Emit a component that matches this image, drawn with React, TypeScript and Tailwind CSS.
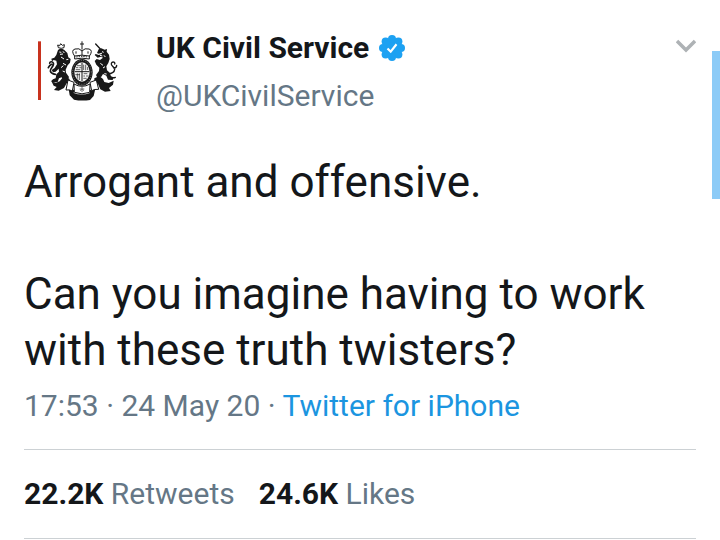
import React from "react";

function RoyalArms() {
  return (
    <svg viewBox="-18 0 324 240" className="mt-1.5 h-20 w-[108px] shrink-0" role="img" aria-label="UK Civil Service crest">
      <path d="M24 34h9v176h-9z" fill="#c8321e" />
      <g transform="translate(48 24)">
        <g fill="#181818">
          {/* lion */}
          <path d="M36 36q9-7 19 0l9 9 3 13 7 5-2 11-7 8-6 13 1 9 9 13-4 9-12 2-6-10-8 3-4 11-13 2-7-4 6-6 8-3 2-12 8-8-1-9-9 9-8 2-4-7 9-6 7-11-2-11-8-2-5 4-2-8 9-3 6-8z" />
          {/* unicorn */}
          <path d="M158 34l8-3 10 4 7-2-1 8 7 9 2 13-4 12-6 10 2 12 9 8 2 11 8 5-2 5-14-1-5-12-10-5-5 8-12 3-4-8 9-12 1-10-9-9-5-11 6-6 10 3 9-7-6-3-10 3-9-8 3-3 9 3 10-3-1-4-9 3-5-2z" />
          {/* outer ribbon curls */}
          <path d="M17 131l12 4 12-5 8-10 9-4 12 6 3 9-11 5-8 14-16 8-14-2 8-9-9-4z" />
          <path d="M145 121l15-7 11 9 4 9 13 3 15-7-2 12-12 10 5 9-17 2-14-7-7-16-11-6z" />
          {/* base ribbon */}
          <path d="M68 153l17 3-2 9q24 9 49 0l-1-8 17-5-5 22-11 12q-25 4-48-1l-13-13z" />
        </g>
        <g fill="none" stroke="#181818" strokeLinecap="round">
          <path d="M28 109q-13-2-15-10c-2-8 13-15 9-24-3-6-11-4-11 1M17 79q-7 3-10 10" strokeWidth="5" />
          <path d="M185 108q20-2 21-14c1-8-13-9-10-18 3-7 13-4 10 2M204 91q8-1 8-9M192 114q7 8 16 4" strokeWidth="4" />
          <path d="M149 18l14 15" strokeWidth="4" />
        </g>
        {/* modelling on the supporters */}
        <g fill="none" stroke="#fff" strokeWidth="3">
          <path d="M40 42l6 1M51 40l4 5M42 49l9-1M45 57l9 6M61 65l6-1M51 76l9 5M45 89l7-6M50 99l7 3" />
          <path d="M168 41l5 2M162 52l7 2M174 52l4 5M163 76l8 6M171 90l6-4M175 107l7 1" />
        </g>
        <g fill="#fff" stroke="#181818" strokeWidth="3">
          <path d="M37 29l-2-8 6 2 3-6 5 5 6-2-1 9q-8 4-17 0z" />
        </g>
        {/* inner ribbon panels */}
        <g fill="#fff" stroke="#181818" strokeWidth="3" strokeLinejoin="round">
          <path d="M66 126l18 7-5 26q-8-5-19-3z" />
          <path d="M151 126l-19 7 5 25q8-5 21-4z" />
          <path d="M84 138q24 14 48 0l-1 25q-23 9-46 0z" />
        </g>
        {/* garter and shield */}
        <ellipse cx="108" cy="103" rx="32" ry="40" fill="#181818" />
        <ellipse cx="108" cy="103" rx="28" ry="36" fill="none" stroke="#aaa" strokeWidth="2" strokeDasharray="3 4" />
        <ellipse cx="108" cy="102" rx="23" ry="29" fill="#f6f6f6" />
        <g fill="none" stroke="#181818" strokeWidth="3">
          <path d="M108 74v55M86 101h44" />
          <path d="M93 83h12M90 89h7M100 89h6M89 95h14M113 80v16M119 80v17M125 87v9M94 106v16M100 106v20M88 110h14M113 107h11M112 114h5M120 114h8M112 121h10" strokeWidth="2" />
        </g>
        {/* crown */}
        <g fill="#fff" stroke="#181818" strokeWidth="3" strokeLinejoin="round">
          <path d="M87 56Q73 37 87 33q13-4 21 6 8-10 21-6 14 4 0 23z" />
          <path d="M108 10v25M102 18h12M108 38v18M90 40v7M126 40v7" fill="none" />
          <path d="M86 54q22-5 44 0v9q-22-5-44 0z" />
        </g>
        <path d="M91 57q17-3 34 0" fill="none" stroke="#181818" strokeWidth="3" strokeDasharray="4 3" />
        <path d="M108 145v17M101 153h14M102 158l6-5 6 5" fill="none" stroke="#777" strokeWidth="3" />
      </g>
    </svg>
  );
}

function VerifiedBadge() {
  return (
    <svg viewBox="0 0 26 26" className="size-[26px]" role="img" aria-label="Verified account">
      <g fill="#1da1f2">
        <circle cx="13" cy="13" r="10" />
        <circle cx="13" cy="4" r="4" />
        <circle cx="19.4" cy="6.6" r="4" />
        <circle cx="22" cy="13" r="4" />
        <circle cx="19.4" cy="19.4" r="4" />
        <circle cx="13" cy="22" r="4" />
        <circle cx="6.6" cy="19.4" r="4" />
        <circle cx="4" cy="13" r="4" />
        <circle cx="6.6" cy="6.6" r="4" />
      </g>
      <path d="M8.5 13.5l3.2 3.2 5.8-7.4" fill="none" stroke="#fff" strokeWidth="2.2" />
    </svg>
  );
}

export default function App() {
  return (
    <main className="relative bg-white px-6 pt-6 font-['Roboto',sans-serif] text-[30px] text-[#657786]">
      <article>
        <header className="flex items-start gap-6">
          <RoyalArms />
          <div className="min-w-0 flex-1 leading-[48px]">
            <div className="flex items-center gap-2.5">
              <h1 className="font-bold text-[#14171a]">UK Civil Service</h1>
              <VerifiedBadge />
            </div>
            <a href="#profile" className="block">@UKCivilService</a>
          </div>
          <button type="button" aria-label="More options" className="mt-3 flex h-5 w-5 items-center justify-center">
            <svg viewBox="0 0 20 20" className="size-5 shrink-0" aria-hidden="true">
              <path d="M1 5l9 9 9-9" fill="none" stroke="#aeb2b5" strokeWidth="3.5" />
            </svg>
          </button>
        </header>

        <div className="mt-[34px] text-[44px] leading-[56px] text-[#14171a]">
          <p>Arrogant and offensive.</p>
          <p className="mt-14">Can you imagine having to work with these truth twisters?</p>
        </div>

        <p className="leading-[56px]">
          <time dateTime="2020-05-24T17:53">17:53 · 24 May 20</time> ·{" "}
          <a href="#source" className="text-[#1b95e0]">Twitter for iPhone</a>
        </p>

        <div className="mt-[15px] flex gap-6 border-y border-[#ccd1d4] leading-[88px]">
          <a href="#retweets"><strong className="font-bold text-[#14171a]">22.2K</strong> Retweets</a>
          <a href="#likes"><strong className="font-bold text-[#14171a]">24.6K</strong> Likes</a>
        </div>
      </article>
      <div className="absolute top-[51px] right-0 h-[148px] w-2 bg-[#8ccbf7]" />
    </main>
  );
}
